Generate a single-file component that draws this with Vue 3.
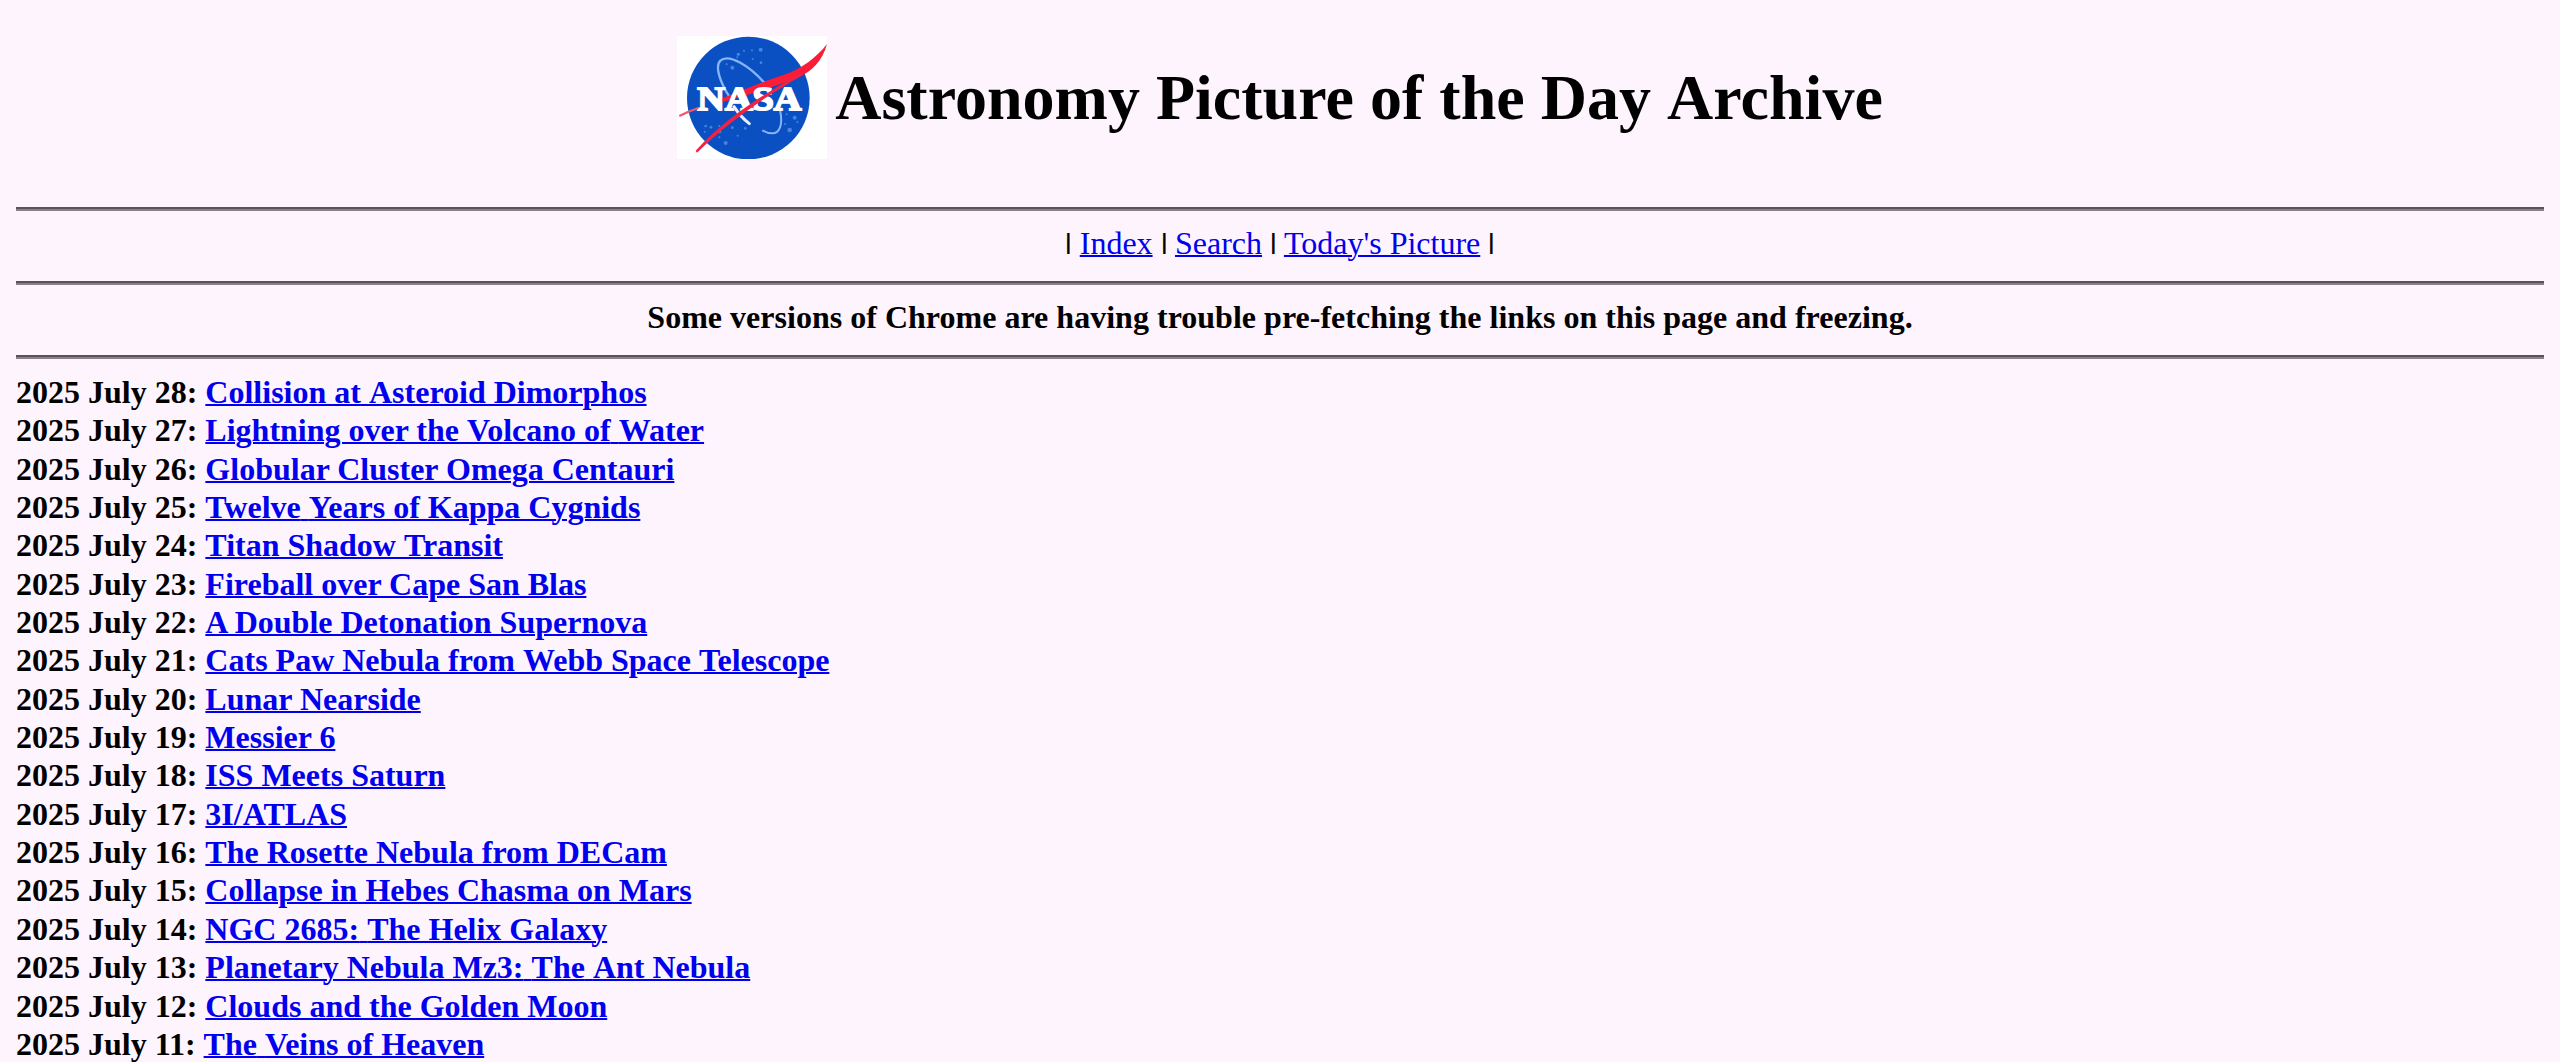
<script setup>
const entries = [
  ['2025 July 28', 'Collision at Asteroid Dimorphos'],
  ['2025 July 27', 'Lightning over the Volcano of Water'],
  ['2025 July 26', 'Globular Cluster Omega Centauri'],
  ['2025 July 25', 'Twelve Years of Kappa Cygnids'],
  ['2025 July 24', 'Titan Shadow Transit'],
  ['2025 July 23', 'Fireball over Cape San Blas'],
  ['2025 July 22', 'A Double Detonation Supernova'],
  ['2025 July 21', 'Cats Paw Nebula from Webb Space Telescope'],
  ['2025 July 20', 'Lunar Nearside'],
  ['2025 July 19', 'Messier 6'],
  ['2025 July 18', 'ISS Meets Saturn'],
  ['2025 July 17', '3I/ATLAS'],
  ['2025 July 16', 'The Rosette Nebula from DECam'],
  ['2025 July 15', 'Collapse in Hebes Chasma on Mars'],
  ['2025 July 14', 'NGC 2685: The Helix Galaxy'],
  ['2025 July 13', 'Planetary Nebula Mz3: The Ant Nebula'],
  ['2025 July 12', 'Clouds and the Golden Moon'],
  ['2025 July 11', 'The Veins of Heaven'],
]
const stars = [
  [302, 89, 6], [276, 91, 3], [252, 92, 3], [235, 103, 5], [232, 112, 3], [303, 128, 4],
  [278, 117, 3], [217, 143, 6], [200, 133, 3], [137, 318, 4], [153, 322, 4], [178, 318, 3],
  [134, 335, 3], [180, 336, 4], [197, 369, 6], [217, 323, 4], [256, 325, 4], [178, 352, 3],
  [404, 293, 6], [380, 283, 3], [389, 330, 7], [412, 306, 3], [375, 312, 3], [233, 347, 3],
]
// Spaces ahead of slanted capitals are kept apart so the font doesn't kern them.
const pieces = (text) => text.split(/( (?=[ATVWY]))/)
</script>

<template>
  <main class="page">
    <header class="head">
      <svg class="logo" viewBox="51 48 450 369" preserveAspectRatio="none">
        <rect x="51" y="48" width="450" height="369" fill="#fff" />
        <ellipse cx="265" cy="234" rx="184" ry="184" fill="#0b50c3" />
        <circle v-for="([x, y, r], i) in stars" :key="i" :cx="x" :cy="y" :r="r" fill="#6fa6ec" opacity=".6" />
        <path d="M318 194C270 138 207 99 181 122C163 140 182 190 208 230" fill="none" stroke="#86b4f5" stroke-width="7" />
        <path d="M360 270C370 316 358 340 337 340C325 340 315 336 307 331" fill="none" stroke="#86b4f5" stroke-width="6" />
        <path d="M177 238C250 210 315 182 370 165C425 147 470 112 501 72C488 122 455 156 410 174C340 202 260 226 177 249Z" fill="#fb1c37" />
        <text class="wordmark" x="112" y="270" textLength="312" lengthAdjust="spacingAndGlyphs">NASA</text>
        <path d="M222 260Q242 291 268 311" fill="none" stroke="#e8f0ff" stroke-width="9" stroke-linecap="round" />
        <path d="M425 158C345 204 210 279 107 392L111 398C215 297 330 221 428 166Z" fill="#f12342" />
        <path d="M58 288Q88 273 115 264" fill="none" stroke="#f2576c" stroke-width="6" />
      </svg>
      <h1><span v-for="(p, i) in pieces('Astronomy Picture of the Day Archive')" :key="i" :class="{ gap: p === ' ' }">{{ p }}</span></h1>
    </header>
    <hr>
    <nav><i>|</i> <a>Index</a> <i>|</i> <a>Search</a> <i>|</i> <a>Today's Picture</a> <i>|</i></nav>
    <hr>
    <p class="notice">Some versions of Chrome are having trouble pre-fetching the links on this page and freezing.</p>
    <hr>
    <div class="list">
      <div v-for="[date, title] in entries" :key="date">{{ date }}:<span class="gap">{{ ' ' }}</span><a><span v-for="(p, i) in pieces(title)" :key="i" :class="{ gap: p === ' ' }">{{ p }}</span></a></div>
    </div>
  </main>
</template>

<style>
html, body { margin: 0; background: #fef4fe; overflow: hidden; }
</style>

<style scoped>
.page {
  box-sizing: border-box;
  height: 1062px;
  overflow: hidden;
  padding: 36px 16px 0;
  background: #fef4fe;
  color: #000;
  font: 32px/38.35px "Liberation Serif", "Times New Roman", serif;
}
.head { display: flex; justify-content: center; align-items: center; gap: 8px; height: 123px; margin-bottom: 48px; }
.logo { width: 150px; height: 123px; flex: none; }
.wordmark { font: bold 104px "Liberation Serif", serif; fill: #fff; stroke: #fff; stroke-width: 6px; }
h1 { margin: 0; font-size: 64px; line-height: 74px; letter-spacing: .02px; white-space: nowrap; }
hr { height: 0; margin: 0; border: 0; border-top: 2px solid #5b535c; border-bottom: 2px solid #898089; }
nav, .notice { height: 57px; margin: 0; padding-top: 13px; text-align: center; white-space: nowrap; }
nav i { display: inline-block; font-style: normal; transform: scale(1.5, .75); transform-origin: 50% 8.5px; }
.notice { font-weight: bold; letter-spacing: .018px; }
.list { padding-top: 14px; font-weight: bold; white-space: nowrap; }
a { color: #0000ee; text-decoration: underline; text-decoration-thickness: 2px; cursor: pointer; }
.gap { word-spacing: .01px; }
</style>
